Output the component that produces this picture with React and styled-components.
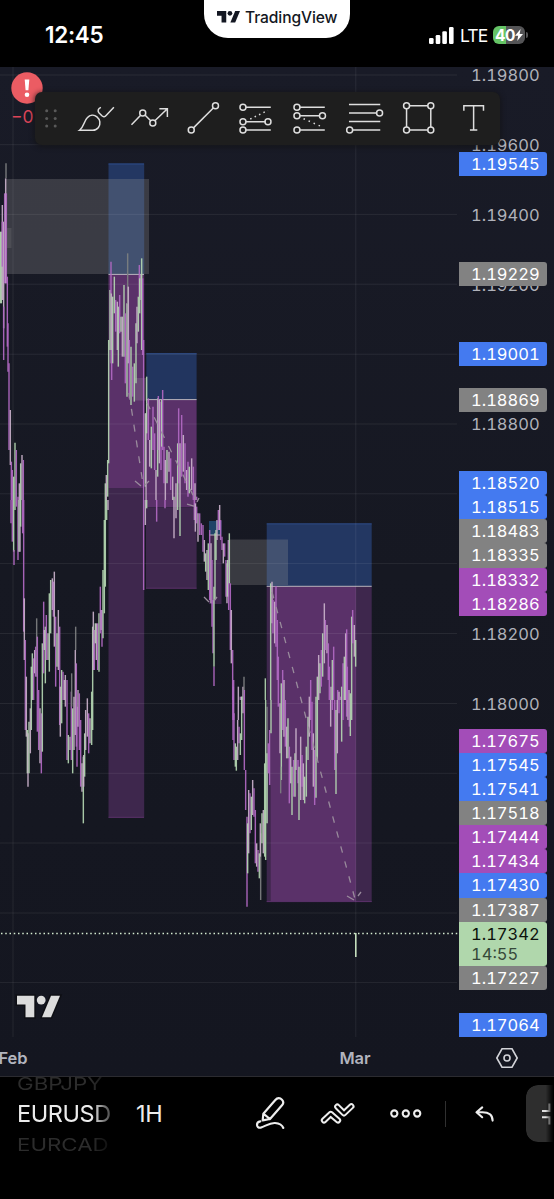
import React from "react";
import styled, { createGlobalStyle } from "styled-components";

// Price bars, grouped by the part of the chart they belong to.
// Every bar is [x, high, low, colour] in thirds of a pixel from the origin,
// nothing in a group goes below its floor.
const BAR_GROUPS = [
	{
		x: 0,
		y: 150,
		floor: 1050,
		bars: `1 245 460 g;4 245 460 g;7 165 450 w;7 215 350 p;11 215 535 w;11 470 630 p;14 130 400 p;17 85 400 w;18 40 85 d;19 130 400 p;22 380 590 p;
24 520 665 p;27 640 900 p;31 780 945 w;34 935 1080 p;37 960 1080 p;41 980 1080 g;45 878 1080 g;49 900 1050 p;54 1040 1080 p;58 1000 1080 w;
62 940 1080 g;66 915 1080 w;70 930 1080 p;316 1000 1080 g;319 975 1050 w;323 930 1040 g;326 570 940 g;330 420 600 g;333 335 430 p;334 430 640 w;
335 600 690 p;338 440 640 g;343 380 490 g;347 450 545 p;352 455 600 w;355 470 650 g;359 435 550 p;363 500 545 g;367 500 620 w;372 405 620 g;376 490 700 p;
381 460 740 g;383 310 460 d;385 410 640 w;388 570 745 p;393 590 765 g;398 650 740 p;403 640 755 g;408 520 700 g;411 470 580 w;415 440 545 g;418 345 440 p;
419 385 490 g;423 375 450 w;425 325 600 g;428 385 615 p;431 570 1080 p;436 790 1010 g;438 790 1080 w;440 680 850 g;445 745 870 p;449 870 950 w;454 830 955 g;459 770 900 p;
464 850 960 p;468 960 1060 w;473 745 980 g;475 738 900 p;478 750 940 w;483 755 960 p;485 750 890 g;488 720 900 p;492 890 1000 p;496 930 1055 w;
501 900 1000 g;507 905 965 w;512 925 1020 p;518 980 1060 w;522 1040 1080 g;528 1000 1080 w;533 880 1080 g;536 775 1000 p;540 880 1080 w;545 795 980 p;
550 855 965 w;555 880 1000 p;560 960 1020 w;564 935 1040 p;568 950 1030 g;575 925 1020 w;580 950 1050 p;585 1000 1080 w;590 1040 1080 p`,
	},
	{
		x: 0,
		y: 500,
		floor: 1000,
		bars: `33 0 70 p;37 0 125 p;41 0 155 g;42 150 195 p;45 0 30 g;49 0 20 p;54 0 180 p;57 0 155 g;60 0 155 w;62 0 80 g;68 0 100 p;71 0 395 p;73 295 480 w;
76 420 690 p;79 530 710 w;82 690 820 g;84 700 860 w;87 665 820 g;91 625 760 w;94 500 690 g;97 460 600 g;101 475 600 p;104 450 520 w;107 440 530 p;
110 355 530 d;112 410 695 p;116 570 750 p;120 625 790 w;124 640 820 p;127 430 755 g;131 305 520 p;133 390 450 w;136 380 550 g;139 345 480 p;144 400 480 w;
148 280 515 g;152 240 400 g;157 235 330 w;160 245 350 p;163 215 440 w;167 350 560 p;171 400 500 g;175 330 510 w;179 380 675 p;181 560 710 w;
185 510 670 g;189 515 600 p;193 540 600 w;196 525 620 w;201 540 780 p;205 705 790 g;210 710 750 w;214 575 780 p;215 520 620 d;218 625 820 g;222 590 750 w;
227 380 450 d;226 450 705 w;229 490 740 p;231 620 800 p;234 570 680 w;238 580 750 p;242 660 860 p;246 790 875 w;250 770 970 g;251 765 860 w;254 700 830 g;
257 630 750 w;262 595 710 w;266 640 760 p;270 655 730 w;275 575 735 g;278 380 690 g;280 335 510 w;283 390 510 p;286 370 430 g;289 370 480 w;293 370 510 p;
297 340 515 g;301 260 400 p;304 330 390 w;306 330 440 p;309 210 415 g;313 60 340 g;316 0 260 g;320 0 60 g;324 0 30 w;431 0 270 p;436 0 75 w;440 0 25 g;
470 0 65 p;495 0 25 p;522 0 115 w;528 0 55 w;533 0 30 g;540 0 108 g;583 0 60 p;586 10 95 w;590 20 70 p;594 40 125 w;599 40 105 p;604 70 105 p;609 75 155 p;
613 120 185 w;617 160 215 g;621 150 240 w;625 130 270 g;629 90 300 p;633 130 310 w;636 180 380 p;639 300 460 p;642 260 500 g;642 500 558 p;
645 100 300 g;648 90 180 g;651 60 120 w;655 30 90 p;659 15 90 w;662 60 120 p;666 110 150 p;670 130 190 w;674 130 170 p;678 180 290 p;681 190 310 w;685 120 290 p`,
	},
	{
		x: 190,
		y: 500,
		floor: 600,
		bars: `113 180 290 g;116 200 330 p;118 100 250 g;121 250 450 p;124 330 490 w;128 450 720 p;130 560 720 p;151 590 720 p;155 590 720 g;159 560 650 w;
162 530 600 d;163 570 720 p;226 535 720 g;242 250 700 g;246 245 370 w;249 300 400 p;254 305 430 w;258 258 440 p;262 360 540 p;
265 470 640 p;274 550 720 g;278 510 650 p;282 540 720 w;358 590 720 w;362 540 720 p;
378 590 720 g;382 530 625 g;386 465 600 w;390 490 580 g;394 450 560 p;398 400 530 g;403 310 490 w;406 360 450 p;411 375 460 w;415 430 540 p;418 500 660 p;423 560 650 w;
427 480 660 g;431 440 620 p;443 570 690 p;447 575 650 w;451 590 650 p;455 560 720 g;459 490 630 p;463 470 600 g;467 400 640 w;470 388 600 p;
472 500 660 p;477 570 690 w;481 580 720 g;485 350 660 g;488 330 430 p;493 375 470 w;497 420 500 g`,
	},
	{
		x: 190,
		y: 700,
		floor: 1000,
		bars: `129 0 120 p;129 -10 60 p;131 -60 60 p;132 40 180 p;136 130 200 g;139 140 212 g;143 60 180 w;145 60 -40 w;147 80 130 p;151 100 165 g;155 0 120 g;155 -10 0 g;159 0 40 w;163 0 210 p;167 210 330 p;171 350 620 p;173 370 520 g;
176 270 460 w;180 280 400 p;184 290 390 g;188 240 345 w;192 265 350 p;196 330 490 p;200 430 500 w;204 450 515 p;208 460 535 g;212 400 600 d;211 370 470 w;216 340 430 g;220 330 460 w;
224 190 470 g;227 0 480 g;231 20 370 d;231 160 370 g;235 130 220 p;239 90 255 p;243 0 100 g;265 0 20 p;270 10 160 w;274 0 240 g;272 200 280 d;278 0 90 p;282 0 110 w;286 0 140 p;290 80 175 w;
294 55 175 g;298 140 310 p;302 170 250 w;306 200 345 g;311 180 290 p;315 160 290 g;318 85 210 w;324 180 250 p;327 200 360 g;332 110 300 w;336 165 260 p;340 190 300 w;344 230 310 g;
349 140 290 g;354 50 180 g;358 0 110 w;362 0 60 p;366 5 150 p;370 100 260 w;374 150 315 p;378 0 293 g;382 0 180 g;422 0 80 w;427 0 30 p;434 0 210 p;438 30 282 g;442 0 160 w;
447 0 40 p;455 0 125 g;459 0 60 p;470 0 50 p;474 0 60 w;478 0 80 p;481 0 108 g;485 0 60 g`,
	},
];

const BAR_COLORS = {
	g: "#b3d5b0",
	p: "#b068c2",
	w: "#c8b0c9",
	d: "#7d7f80",
};

const GRID_ROWS = [75, 144.7, 214.4, 284.2, 354.2, 424, 493.8, 563.6, 633.5, 703.5, 773.3, 843, 913, 982.6];

// price scale, top to bottom, gap is the space to the label above
const PRICES = [
	{ text: "1.19800", gap: -4 },
	{ text: "1.19600", gap: 46 },
	{ text: "1.19545", tone: "blue", gap: -5 },
	{ text: "1.19400", gap: 27 },
	{ text: "1.19200", gap: 45.5 },
	{ text: "1.19229", tone: "gray", gap: -34.6 },
	{ text: "1.19001", tone: "blue", gap: 55.8 },
	{ text: "1.18869", tone: "gray", gap: 21.8 },
	{ text: "1.18800", gap: 0.1 },
	{ text: "1.18520", tone: "blue", gap: 34.8 },
	{ text: "1.18515", tone: "blue", gap: 0 },
	{ text: "1.18483", tone: "gray", gap: 0 },
	{ text: "1.18335", tone: "gray", gap: 0 },
	{ text: "1.18332", tone: "purple", gap: 0 },
	{ text: "1.18286", tone: "purple", gap: 0 },
	{ text: "1.18200", gap: 6 },
	{ text: "1.18000", gap: 45.8 },
	{ text: "1.17675", tone: "purple", gap: 13 },
	{ text: "1.17545", tone: "blue", gap: 0 },
	{ text: "1.17541", tone: "blue", gap: 0 },
	{ text: "1.17518", tone: "gray", gap: 0 },
	{ text: "1.17444", tone: "purple", gap: 0 },
	{ text: "1.17434", tone: "purple", gap: 0 },
	{ text: "1.17430", tone: "blue", gap: 0 },
	{ text: "1.17387", tone: "gray", gap: 0 },
	{ text: "1.17342", tone: "green", gap: 0, timer: "14:55" },
	{ text: "1.17227", tone: "gray", gap: 0 },
	{ text: "1.17064", tone: "blue", gap: 23.2 },
];

const TONES = {
	blue: "#447af0",
	gray: "#828282",
	purple: "#a34db8",
	green: "#b0d7ac",
};

const BrandMark = ({ className }) => (
	<svg className={className} viewBox="0 0 43 21.5">
		<path d="M0 0H17.3V21.5H8.5V8.8H0Z" />
		<circle cx="24.2" cy="4.4" r="4.4" />
		<path d="M34 0H43L34 21.5H25Z" />
	</svg>
);

const Zones = () => (
	<g>
		<rect x="108.5" y="163.5" width="35.7" height="110.5" fill="#233762" />
		<rect x="108.5" y="274" width="35.7" height="214" fill="#5a3169" />
		<rect x="108.5" y="488" width="35.7" height="329.7" fill="#3e274d" />
		<rect x="146.3" y="353.3" width="50.3" height="46.5" fill="#22355f" />
		<rect x="146" y="399.8" width="50.6" height="107.5" fill="#5a3169" />
		<rect x="146" y="507.3" width="50.6" height="81.2" fill="#3e274d" />
		<rect x="209" y="521" width="12.5" height="14" fill="#1f4467" />
		<rect x="209" y="535" width="12.5" height="69" fill="#3e274d" />
		<rect x="266.7" y="523.5" width="105" height="62.8" fill="#233762" />
		<rect x="266.7" y="586.3" width="105" height="315.7" fill="#3e274d" />
		<rect x="270.7" y="586.3" width="85.3" height="315" fill="#5a3169" />
		<rect x="6" y="179" width="143" height="95" fill="#969696" fillOpacity="0.27" />
		<rect x="7" y="228" width="4.5" height="20" fill="#969696" fillOpacity="0.2" />
		<rect x="135" y="378" width="12" height="22.5" fill="#a0a0a0" fillOpacity="0.25" />
		<rect x="229.5" y="539.5" width="58.5" height="45.5" fill="#969696" fillOpacity="0.27" />
		<path d="M108.5 164H144M146.3 353.7H196.6M266.7 523.9H371.7" stroke="#2d4a86" fill="none" />
		<path d="M108.5 817.3H144M146 588.2H196.6M266.7 901.6H371.7" stroke="#5a3169" fill="none" />
		<path d="M108.5 274.4H144M146.3 399.6H196.6M209 535H221M266.7 586.3H371.7" stroke="#b9b4bd" fill="none" />
	</g>
);

const Chart = () => (
	<Plot viewBox="0 67 459 970">
		<Zones />
		<path
			d={GRID_ROWS.map((y) => `M0 ${y}H457`).join("") + "M13 67V1037M355.8 67V1037"}
			stroke="#ffffff"
			strokeOpacity="0.075"
			fill="none"
		/>
		{BAR_GROUPS.map((group, i) => (
			<g key={i} transform={`translate(${group.x} ${group.y}) scale(0.33333)`}>
				{group.bars.split(";").map((bar, j) => {
					const [x, high, low, color] = bar.trim().split(" ");
					if (Number(high) >= group.floor) return null;
					return (
						<path
							key={j}
							d={`M${x} ${high}V${Math.min(low, group.floor)}`}
							stroke={BAR_COLORS[color]}
							strokeWidth="4.3"
							strokeOpacity="0.93"
						/>
					);
				})}
			</g>
		))}
		{/* position paths */}
		<g fill="none" stroke="#998b9c" strokeWidth="1.3">
			<path d="M129 393L143 484" strokeDasharray="7 9" />
			<path d="M147 403L197 503" strokeDasharray="7 9" />
			<path d="M272 592L355 899" strokeDasharray="6.5 9" />
			<path d="M135 481L141 486M149 481L145 485M187 504L194 506M199 498L197 502M204 597L209 602M217 597L214 601M347 896L354 900M361 892L358 896" />
		</g>
		<path d="M1 933.5H459" stroke="#d3ead0" strokeWidth="1.5" strokeDasharray="1.5 2.75" />
		<path d="M355.8 933V957" stroke="#c4dfbd" strokeWidth="1.6" />
		<g fill="none" stroke="#0e0f14" strokeWidth="3">
			<path d="M17 995.7H34.3V1017.2H25.5V1004.5H17Z" />
			<path d="M51 995.7H60L51 1017.2H42Z" />
		</g>
		<g fill="#dcdcdc">
			<path d="M17 995.7H34.3V1017.2H25.5V1004.5H17Z" />
			<circle cx="41.2" cy="1000.1" r="4.4" />
			<path d="M51 995.7H60L51 1017.2H42Z" />
		</g>
	</Plot>
);

const TOOLS = [
	<g key="brush">
		<path d="M10.6 38.3C15 35 15 29 18.3 25.8C21 23 25 22.4 28 24.8C31.3 27.5 32 32 29.5 35.5C28 37.5 26 38.3 24 38.3Z" />
		<path d="M32 15.3C29 16.5 28.4 19 30.2 21L33 23.8C34.5 25.2 36 24.8 37.2 23.4L45 15.3" />
	</g>,
	<g key="path">
		<path d="M8.5 32.7L17.7 23.3M22 23L27.8 28.8M32 28.8L44.2 17M36.5 16.7H44.5V24.9" />
		<circle cx="19.8" cy="21" r="3" />
		<circle cx="29.9" cy="31" r="3" />
	</g>,
	<g key="trend">
		<path d="M16.5 35.9L36.4 15.9" />
		<circle cx="14.3" cy="38" r="3" />
		<circle cx="38.6" cy="13.7" r="3" />
	</g>,
	<g key="extension">
		<path d="M16 15.3H40.9M16 29.7H35.7M16 38H40.9" />
		<path d="M20.3 27L38 18.4" strokeDasharray="1.5 3.4" />
		<circle cx="13" cy="15.3" r="3" />
		<circle cx="13" cy="29.7" r="3" />
		<circle cx="38.1" cy="29.7" r="3" />
		<circle cx="13" cy="38" r="3" />
	</g>,
	<g key="retracement">
		<path d="M16 15.3H40.9M16 23.7H35.7M16 38H40.9" />
		<path d="M19.6 26.7L38 34.8" strokeDasharray="1.5 4" />
		<circle cx="13" cy="15.3" r="3" />
		<circle cx="13" cy="23.7" r="3" />
		<circle cx="38.6" cy="23.7" r="3" />
		<circle cx="13" cy="38" r="3" />
	</g>,
	<g key="levels">
		<path d="M11 12.5H42.4M11 21H38.7M11 29.4H42.4M14.7 38H42.4" />
		<circle cx="41.7" cy="21" r="3" />
		<circle cx="11.7" cy="38" r="3" />
	</g>,
	<g key="rectangle">
		<path d="M17.6 13.7H35.9M17.6 38H35.9M14.6 16.7V35M38.9 16.7V35" />
		<circle cx="14.6" cy="13.7" r="3" />
		<circle cx="38.9" cy="13.7" r="3" />
		<circle cx="14.6" cy="38" r="3" />
		<circle cx="38.9" cy="38" r="3" />
	</g>,
	<g key="text">
		<path d="M17.9 18.8V13.7H37.6V18.8M27.7 13.7V38M24 38H31.4" />
	</g>,
];

const App = () => {
	return (
		<Screen>
			<GlobalStyle />
			<StatusBar>
				<Clock>12:45</Clock>
				<BrandTab>
					<TabMark />
					<span>TradingView</span>
				</BrandTab>
				<Signal viewBox="0 0 25 17">
					<rect x="0" y="11" width="4.6" height="6" rx="1.3" />
					<rect x="6.7" y="8" width="4.6" height="9" rx="1.3" />
					<rect x="13.3" y="4.2" width="4.6" height="12.8" rx="1.3" />
					<rect x="20" y="0" width="4.6" height="17" rx="1.3" />
				</Signal>
				<Network>LTE</Network>
				<Battery>
					40
					<svg viewBox="0 0 8 12" width="8" height="12">
						<path d="M5.6 0L0 6.8H3.2L2.2 12L8 5H4.6Z" fill="#fff" />
					</svg>
				</Battery>
				<BatteryTip />
			</StatusBar>

			<ChartPanel>
				<ChartRow>
					<Chart />
					<PriceScale>
						{PRICES.map((price) => (
							<Price key={price.text} $tone={price.tone} $gap={price.gap}>
								{price.text}
								{price.timer && <Timer>{price.timer}</Timer>}
							</Price>
						))}
					</PriceScale>
				</ChartRow>
				<TimeScale>
					<Month $width={26}>Feb</Month>
					<Month $width={658}>Mar</Month>
					<ScaleIcon viewBox="0 0 22 20">
						<path d="M6 0.8H16L21.2 10L16 19.2H6L0.8 10Z" />
						<circle cx="11" cy="10" r="3" />
					</ScaleIcon>
				</TimeScale>
				<Alert>
					<AlertIcon viewBox="0 0 32 32">
						<circle cx="16" cy="16" r="15.7" fill="#eb5c63" />
						<path d="M13.7 7.5h4.6l-.9 10.8h-2.8z" fill="#fff" />
						<circle cx="16" cy="22.8" r="2.3" fill="#fff" />
					</AlertIcon>
					<Loss>−0</Loss>
				</Alert>
				<Toolbar>
					<Grip viewBox="0 0 12 19">
						{[1.8, 9.6, 17].map((y) => (
							<g key={y}>
								<circle cx="1.7" cy={y} r="1.5" />
								<circle cx="10.2" cy={y} r="1.5" />
							</g>
						))}
					</Grip>
					{TOOLS.map((tool) => (
						<Tool key={tool.key} viewBox="0 0 54 53">
							{tool}
						</Tool>
					))}
				</Toolbar>
			</ChartPanel>

			<BottomBar>
				<Symbols>
					<SideSymbol>GBPJPY</SideSymbol>
					<Symbol>EURUSD</Symbol>
					<SideSymbol $below>EURCAD</SideSymbol>
				</Symbols>
				<Interval>1H</Interval>
				<Action viewBox="0 0 110 60" $w={110} $left={77}>
					<g transform="scale(0.3333)" strokeWidth="6.5">
						<path d="M38 106L40 86L76 45C82 38 90 38 96 44C101 49 101 55 96 61L60 102ZM40 86L60 102" />
						<path d="M31 109C17 111 18 130 32 128C46 124 58 113 75 114C88 115 97 121 100 129" />
					</g>
					<g transform="scale(0.3333)" strokeLinejoin="round">
						<path d="M222 106L242 87L264 106M262 65L282 85L304 64" strokeWidth="19" />
						<path d="M222 106L242 87L264 106M262 65L282 85L304 64" strokeWidth="7" stroke="#000" />
					</g>
				</Action>
				<Action viewBox="0 0 32 60" $w={32} $left={30}>
					<circle cx="4.3" cy="28.5" r="3.1" />
					<circle cx="15.8" cy="28.5" r="3.1" />
					<circle cx="27.2" cy="28.5" r="3.1" />
				</Action>
				<Divider />
				<Action viewBox="0 0 20 60" $w={20} $left={29}>
					<path d="M7.2 22.4L1.5 27.2L7.2 32.2M1.8 27.2H7.5C14 27.2 17.6 30 17.6 35.6" />
				</Action>
				<Collapse>
					<svg viewBox="0 0 12 24" width="12" height="24">
						<path d="M0 9H7.5V1.5M0 15.3H7.5V22.5" fill="none" stroke="#e0e0e0" strokeWidth="2" />
					</svg>
				</Collapse>
			</BottomBar>
		</Screen>
	);
};

export default App;

const GlobalStyle = createGlobalStyle`
	body {
		margin: 0;
		background: #000;
		overflow: hidden;
	}
`;

const Screen = styled.div`
	display: flex;
	flex-direction: column;
	width: 554px;
	height: 1199px;
	overflow: hidden;
	background: #000;
	color: #fff;
	font-family: Inter, "Liberation Sans", sans-serif;
`;

//status bar

const StatusBar = styled.header`
	display: flex;
	height: 67px;
	flex: none;
`;

const Clock = styled.div`
	width: 159px;
	padding: 21px 0 0 45px;
	font-size: 22.5px;
	line-height: 28px;
	font-weight: 600;
	letter-spacing: -0.3px;
	box-sizing: content-box;
`;

const BrandTab = styled.div`
	display: flex;
	align-items: center;
	gap: 5px;
	width: 146px;
	height: 38px;
	flex: none;
	padding: 0 0 4px 13px;
	box-sizing: border-box;
	border-radius: 0 0 24px 24px;
	background: #fff;
	color: #131722;
	font-size: 15.6px;
	font-weight: 500;
	letter-spacing: -0.1px;
`;

const TabMark = styled(BrandMark)`
	width: 23px;
	height: 11.5px;
	fill: #131722;
`;

const Signal = styled.svg`
	width: 25px;
	height: 17px;
	margin: 27px 6px 0 79px;
	flex: none;
	fill: #fff;
`;

const Network = styled.div`
	width: 33px;
	padding-top: 24px;
	font-size: 17.5px;
	line-height: 24px;
	letter-spacing: -0.9px;
`;

const Battery = styled.div`
	display: flex;
	align-items: center;
	justify-content: center;
	gap: 0;
	width: 32px;
	height: 18px;
	margin-top: 26px;
	border-radius: 6px;
	background: linear-gradient(90deg, #65c466 40%, #545456 40%);
	font-size: 15.5px;
	font-weight: 700;
	letter-spacing: -0.5px;
`;

const BatteryTip = styled.div`
	width: 2px;
	height: 6px;
	margin: 32px 0 0 1px;
	border-radius: 0 2px 2px 0;
	background: #545456;
`;

//chart

const ChartPanel = styled.main`
	position: relative;
	height: 1010px;
	box-sizing: border-box;
	flex: none;
	overflow: hidden;
	border-bottom: 1px solid #2b2b30;
	background: linear-gradient(#191b27, #161822 50%, #141620);
`;

const ChartRow = styled.div`
	display: flex;
	height: 970px;
`;

const Plot = styled.svg`
	width: 459px;
	height: 970px;
	flex: none;
`;

const PriceScale = styled.div`
	display: flex;
	flex-direction: column;
	width: 88px;
`;

const Price = styled.div`
	flex: none;
	height: ${({ $tone }) => ($tone === "green" ? 44.2 : $tone ? 24.15 : 24)}px;
	margin-top: ${({ $gap }) => $gap}px;
	padding-left: 12px;
	box-sizing: border-box;
	border-radius: 0 3px 3px 0;
	background: ${({ $tone }) => TONES[$tone] || "transparent"};
	color: ${({ $tone }) => ($tone === "green" ? "#0c120c" : $tone ? "#fff" : "#b0b2ba")};
	font-size: 16.5px;
	line-height: 24px;
	font-variant-numeric: tabular-nums;
`;

const Timer = styled.div`
	margin-top: -4px;
	color: #36493a;
`;

const TimeScale = styled.div`
	display: flex;
	align-items: center;
	height: 42px;
`;

const Month = styled.div`
	display: flex;
	justify-content: center;
	width: ${({ $width }) => $width}px;
	flex: none;
	color: #b2b4be;
	font-size: 16.5px;
	font-weight: 600;
`;

const ScaleIcon = styled.svg`
	width: 22px;
	height: 20px;
	margin-left: -188.5px;
	flex: none;
	fill: none;
	stroke: #d2d3d8;
	stroke-width: 1.6;
`;

const Alert = styled.div`
	position: absolute;
	top: 5px;
	left: 11px;
	display: flex;
	flex-direction: column;
`;

const AlertIcon = styled.svg`
	width: 32px;
	height: 32px;
`;

const Loss = styled.div`
	color: #dc4457;
	font-size: 17.5px;
	line-height: 26px;
`;

const Toolbar = styled.div`
	position: absolute;
	top: 25px;
	left: 35px;
	display: flex;
	align-items: center;
	width: 465px;
	height: 53px;
	border-radius: 7px;
	background: #1e1e1e;
	box-shadow: 0 1px 5px 1px rgba(18, 18, 20, 0.7);
`;

const Grip = styled.svg`
	width: 12px;
	height: 19px;
	margin: 0 11.5px 0 10.4px;
	flex: none;
	fill: #595959;
`;

const Tool = styled.svg`
	width: 53.85px;
	height: 53px;
	flex: none;
	fill: none;
	stroke: #dedede;
	stroke-width: 1.5;
`;

//bottom bar

const BottomBar = styled.footer`
	display: flex;
	height: 122px;
	overflow: hidden;
`;

const Symbols = styled.div`
	display: flex;
	flex-direction: column;
	width: 95px;
	height: 80px;
	flex: none;
	margin-left: 17px;
	overflow: hidden;
	mask-image: linear-gradient(90deg, #000 78%, rgba(0, 0, 0, 0.25));
`;

const Symbol = styled.div`
	height: 30px;
	color: #ececec;
	font-size: 23.5px;
	line-height: 30px;
	letter-spacing: -0.4px;
	margin-top: 7px;
`;

const SideSymbol = styled.div`
	height: 16px;
	margin-top: ${({ $below }) => ($below ? 8 : -1)}px;
	color: #2c2c2c;
	font-size: 22.3px;
	line-height: 16px;
	transform: scaleY(0.76);
`;

const Interval = styled.div`
	width: 61px;
	flex: none;
	padding: 22px 0 0 24px;
	color: #ececec;
	font-size: 23.5px;
	line-height: 30px;
	letter-spacing: -0.3px;
	box-sizing: border-box;
`;

const Action = styled.svg`
	width: ${({ $w }) => $w}px;
	height: 60px;
	flex: none;
	margin: 8px 0 0 ${({ $left }) => $left}px;
	fill: none;
	stroke: #ededed;
	stroke-width: 2.1;
	stroke-linecap: round;
	stroke-linejoin: round;
`;

const Divider = styled.div`
	width: 1px;
	height: 26px;
	flex: none;
	margin: 24px 0 0 23px;
	background: #303030;
`;

const Collapse = styled.div`
	display: flex;
	align-items: center;
	justify-content: flex-end;
	width: 28px;
	height: 57px;
	flex: none;
	margin: 8px 0 0 31px;
	border-radius: 12px 0 0 12px;
	background: #2e2e2e;
	mask-image: linear-gradient(90deg, #000 70%, transparent 98%);
`;
